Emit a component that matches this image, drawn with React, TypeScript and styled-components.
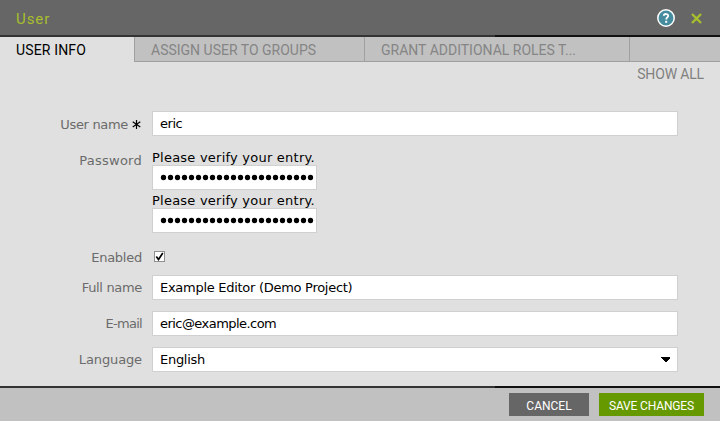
import React from "react";
import styled, { createGlobalStyle } from "styled-components";

const GlobalStyle = createGlobalStyle`
  * { box-sizing: border-box; }
  body { margin: 0; background: #e0e0e0; }
`;

const Dialog = styled.div`
  display: flex;
  flex-direction: column;
  width: 720px;
  height: 421px;
  overflow: hidden;
  background: #e0e0e0;
  color: #000;
  font: 13px/16px "DejaVu Sans", sans-serif;
`;

const Header = styled.header`
  display: flex;
  align-items: center;
  flex: none;
  height: 35px;
  padding: 1px 18px 0 16px;
  background: #666;
`;

const Title = styled.h1`
  flex: 1;
  margin: 0;
  padding-top: 2px;
  color: #a8be2d;
  font: 400 15px/20px Roboto, sans-serif;
  letter-spacing: 0.95px;
`;

const IconButton = styled.button<{ $gap?: number }>`
  display: flex;
  padding: 0;
  margin-left: ${(p) => p.$gap ?? 0}px;
  border: 0;
  background: none;
`;

const Divider = styled.div`
  flex: none;
  height: 2px;
  background: linear-gradient(to right, #333 0 495px, #111 495px);
`;

const Tabs = styled.nav`
  display: flex;
  flex: none;
  height: 25px;
`;

const Tab = styled.div<{ $width?: number; $active?: boolean; $spacing?: number }>`
  flex: ${(p) => (p.$width ? `0 0 ${p.$width}px` : "1")};
  padding-left: 16px;
  border-left: ${(p) => (p.$active ? "0" : "1px solid #a0a0a0")};
  border-bottom: ${(p) => (p.$active ? "0" : "1px solid #a0a0a0")};
  background: ${(p) => (p.$active ? "#e0e0e0" : "#c1c1c1")};
  color: ${(p) => (p.$active ? "#000" : "#858585")};
  font: 400 14px/27px Roboto, sans-serif;
  letter-spacing: ${(p) => p.$spacing ?? 0}px;
  white-space: nowrap;
`;

const Toolbar = styled.div`
  display: flex;
  justify-content: flex-end;
  flex: none;
  height: 49px;
  padding: 2px 16px 0 0;
`;

const ShowAll = styled.span`
  color: #808080;
  font: 400 14px/20px Roboto, sans-serif;
  letter-spacing: -0.15px;
`;

const Form = styled.form`
  display: flex;
  flex-direction: column;
  flex: 1;
  padding-right: 42px;
`;

const Row = styled.div<{ $height: number }>`
  display: grid;
  grid-template-columns: 142px 526px;
  column-gap: 10px;
  align-items: start;
  height: ${(p) => p.$height}px;
`;

const Label = styled.label<{ $top?: number; $spacing?: number }>`
  display: flex;
  justify-content: flex-end;
  padding-top: ${(p) => p.$top ?? 5}px;
  color: #6b6b6b;
  letter-spacing: ${(p) => p.$spacing ?? 0}px;
  white-space: nowrap;
`;

const Required = styled.span`
  display: flex;
  margin: 3px 1px 0 4px;
`;

const Field = styled.div<{ $narrow?: boolean; $spacing?: number }>`
  display: flex;
  align-items: center;
  justify-content: space-between;
  width: ${(p) => (p.$narrow ? "165px" : "100%")};
  height: 25px;
  padding: 0 7px;
  border: 1px solid #d0d0d0;
  background: #fff;
  letter-spacing: ${(p) => p.$spacing ?? 0}px;
  white-space: nowrap;

  svg { flex: none; }
`;

const PasswordStack = styled.div`
  display: flex;
  flex-direction: column;
`;

const Hint = styled.div`
  height: 18px;
  line-height: 21px;
  letter-spacing: 0.23px;
  white-space: nowrap;
`;

const Checkbox = styled.div`
  width: 11px;
  height: 11px;
  margin: 4px 0 0 2px;
  border: 1px solid #8e8f8f;
  background: #fff;
  display: flex;
`;

const Footer = styled.footer`
  display: flex;
  justify-content: flex-end;
  flex: none;
  gap: 10px;
  height: 33px;
  padding: 5px 16px 0 0;
  background: #c1c1c1;
`;

const Action = styled.button<{ $primary?: boolean }>`
  width: ${(p) => (p.$primary ? 105 : 80)}px;
  height: 23px;
  padding: 2px 0 0;
  border: 0;
  background: ${(p) => (p.$primary ? "#690" : "#666")};
  color: #fff;
  font: 12px/20px Roboto, sans-serif;
  letter-spacing: ${(p) => (p.$primary ? -0.15 : 0)}px;
  white-space: nowrap;
`;

const Dots = () => (
  <svg width="154" height="7" viewBox="0 0 154 7">
    {Array.from({ length: 22 }, (_, i) => (
      <circle key={i} cx={3.5 + i * 7} cy="3.5" r="2.65" />
    ))}
  </svg>
);

export default function App() {
  return (
    <>
      <GlobalStyle />
      <Dialog>
        <Header>
          <Title>User</Title>
          <IconButton aria-label="Help">
            <svg width="18" height="18" viewBox="0 0 18 18">
              <circle cx="9" cy="9" r="8.2" fill="#458c9e" stroke="#fff" strokeWidth="1.5" />
              <path d="M6.8 6.8C6.9 4.4 11.3 4.4 11.2 7C11.1 8.5 9.2 8.5 9.2 10.6" fill="none" stroke="#fff" strokeWidth="1.8" />
              <rect x="8.2" y="11.8" width="2" height="2" fill="#fff" />
            </svg>
          </IconButton>
          <IconButton aria-label="Close" $gap={16}>
            <svg width="11" height="11" viewBox="0 0 11 11">
              <path d="M1 1L10 10M10 1L1 10" fill="none" stroke="#a8be2d" strokeWidth="2.4" />
            </svg>
          </IconButton>
        </Header>
        <Divider />
        <Tabs>
          <Tab $active $width={134} $spacing={0.15}>USER INFO</Tab>
          <Tab $width={230}>ASSIGN USER TO GROUPS</Tab>
          <Tab $width={265}>GRANT ADDITIONAL ROLES T...</Tab>
          <Tab />
        </Tabs>
        <Toolbar>
          <ShowAll>SHOW ALL</ShowAll>
        </Toolbar>
        <Form>
          <Row $height={36}>
            <Label $top={6} $spacing={-0.33}>
              User name
              <Required>
                <svg width="9" height="9" viewBox="0 0 9 9">
                  <path d="M4.5 0V9M0.7 1.8L8.3 7M8.3 1.8L0.7 7" stroke="#000" strokeWidth="1.2" />
                </svg>
              </Required>
            </Label>
            <Field $spacing={-0.45}>eric</Field>
          </Row>
          <Row $height={100}>
            <Label $top={6} $spacing={0.25}>Password</Label>
            <PasswordStack>
              <Hint>Please verify your entry.</Hint>
              <Field $narrow><Dots /></Field>
              <Hint>Please verify your entry.</Hint>
              <Field $narrow><Dots /></Field>
            </PasswordStack>
          </Row>
          <Row $height={28}>
            <Label $top={3} $spacing={-0.25}>Enabled</Label>
            <Checkbox>
              <svg width="9" height="9" viewBox="0 0 9 9">
                <path d="M1.3 4.5L3.5 7.5L7.8 1" fill="none" stroke="#000" strokeWidth="1.7" />
              </svg>
            </Checkbox>
          </Row>
          <Row $height={36}>
            <Label $spacing={-0.33}>Full name</Label>
            <Field $spacing={-0.28}>Example Editor (Demo Project)</Field>
          </Row>
          <Row $height={36}>
            <Label $spacing={-0.7}>E-mail</Label>
            <Field $spacing={-0.55}>eric@example.com</Field>
          </Row>
          <Row $height={25}>
            <Label $spacing={-0.12}>Language</Label>
            <Field $spacing={-0.28}>
              English
              <svg width="9" height="5" viewBox="0 0 9 5" shapeRendering="crispEdges">
                <path d="M0 0H9V1L5 5H4L0 1Z" />
              </svg>
            </Field>
          </Row>
        </Form>
        <Divider />
        <Footer>
          <Action type="button">CANCEL</Action>
          <Action type="button" $primary>SAVE CHANGES</Action>
        </Footer>
      </Dialog>
    </>
  );
}
